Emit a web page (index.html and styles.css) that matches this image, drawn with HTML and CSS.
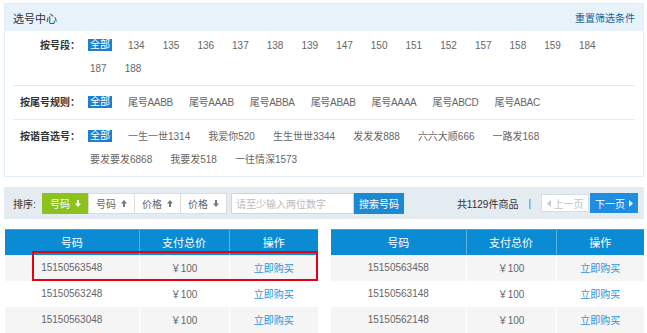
FILE: index.html
```html
<!DOCTYPE html>
<html>
<head>
<meta charset="utf-8">
<link rel="stylesheet" href="styles.css">
</head>
<body>
<div class="page">
  <div class="panel">
    <div class="panel-head">
      <span class="title">选号中心</span>
      <a class="reset">重置筛选条件</a>
    </div>
    <div class="filters">
      <div class="frow first">
        <div class="flabel">按号段：</div>
        <div class="fopts">
          <span class="opt on">全部</span><span class="opt">134</span><span class="opt">135</span><span class="opt">136</span><span class="opt">137</span><span class="opt">138</span><span class="opt">139</span><span class="opt">147</span><span class="opt">150</span><span class="opt">151</span><span class="opt">152</span><span class="opt">157</span><span class="opt">158</span><span class="opt">159</span><span class="opt">184</span><span class="opt">187</span><span class="opt">188</span>
        </div>
      </div>
      <div class="frow">
        <div class="flabel">按尾号规则：</div>
        <div class="fopts tight">
          <span class="opt on">全部</span><span class="opt">尾号AABB</span><span class="opt">尾号AAAB</span><span class="opt">尾号ABBA</span><span class="opt">尾号ABAB</span><span class="opt">尾号AAAA</span><span class="opt">尾号ABCD</span><span class="opt">尾号ABAC</span>
        </div>
      </div>
      <div class="frow last">
        <div class="flabel">按谐音选号：</div>
        <div class="fopts">
          <span class="opt on">全部</span><span class="opt">一生一世1314</span><span class="opt">我爱你520</span><span class="opt">生生世世3344</span><span class="opt">发发发888</span><span class="opt">六六大顺666</span><span class="opt">一路发168</span><span class="opt">要发要发6868</span><span class="opt">我要发518</span><span class="opt">一往情深1573</span>
        </div>
      </div>
    </div>
  </div>

  <div class="sortbar">
    <span class="sort-label">排序:</span>
    <div class="sort-btns">
      <span class="sbtn active">号码<svg class="arr" viewBox="0 0 7 8"><path d="M2.3 0h2.4v4h2.3L3.5 8 0 4h2.3z"/></svg></span>
      <span class="sbtn">号码<svg class="arr" viewBox="0 0 7 8"><path d="M2.3 8h2.4V4h2.3L3.5 0 0 4h2.3z"/></svg></span>
      <span class="sbtn">价格<svg class="arr" viewBox="0 0 7 8"><path d="M2.3 8h2.4V4h2.3L3.5 0 0 4h2.3z"/></svg></span>
      <span class="sbtn">价格<svg class="arr" viewBox="0 0 7 8"><path d="M2.3 0h2.4v4h2.3L3.5 8 0 4h2.3z"/></svg></span>
    </div>
    <span class="search-input">请至少输入两位数字</span>
    <span class="search-btn">搜索号码</span>
    <div class="pager">
      <span class="count">共1129件商品</span>
      <span class="sep">|</span>
      <span class="pbtn prev"><svg class="tri" viewBox="0 0 4 7"><path d="M4 0v7L0 3.5z"/></svg>上一页</span>
      <span class="pbtn next">下一页<svg class="tri" viewBox="0 0 4 7"><path d="M0 0v7l4-3.5z"/></svg></span>
    </div>
  </div>

  <div class="tables">
    <table class="tbl left">
      <colgroup><col class="c1"><col class="c2"><col class="c3"></colgroup>
      <thead><tr><th>号码</th><th>支付总价</th><th>操作</th></tr></thead>
      <tbody>
        <tr><td>15150563548</td><td>￥100</td><td><a class="buy">立即购买</a></td></tr>
        <tr><td>15150563248</td><td>￥100</td><td><a class="buy">立即购买</a></td></tr>
        <tr><td>15150563048</td><td>￥100</td><td><a class="buy">立即购买</a></td></tr>
      </tbody>
    </table>
    <table class="tbl right">
      <colgroup><col class="c1"><col class="c2"><col class="c3"></colgroup>
      <thead><tr><th>号码</th><th>支付总价</th><th>操作</th></tr></thead>
      <tbody>
        <tr><td>15150563458</td><td>￥100</td><td><a class="buy">立即购买</a></td></tr>
        <tr><td>15150563148</td><td>￥100</td><td><a class="buy">立即购买</a></td></tr>
        <tr><td>15150562148</td><td>￥100</td><td><a class="buy">立即购买</a></td></tr>
      </tbody>
    </table>
    <div class="highlight"></div>
  </div>
</div>
</body>
</html>
```

FILE: styles.css
```css
* { box-sizing: border-box; }
html, body { margin: 0; padding: 0; background: #fff; }
body {
  font-family: "Liberation Sans", "Noto Sans CJK SC", sans-serif;
  font-size: 10px;
  color: #666;
}
.page { padding: 3px 0 0 4px; width: 644px; }

.panel { border: 1px solid #e2ecf4; }
.panel-head {
  height: 27px;
  background: #e8f2fa;
  display: flex;
  align-items: center;
  justify-content: space-between;
  padding: 0 8px;
}
.title { font-size: 11px; color: #333; }
.reset { font-size: 10px; color: #1b5f91; }

.filters { padding: 0 8px; }
.frow {
  display: flex;
  align-items: flex-start;
  padding: 5px 0;
  border-bottom: 1px solid #e3ebf2;
}
.frow.first { padding-top: 3px; }
.frow.last { border-bottom: none; }
.flabel {
  width: 67px;
  flex: none;
  text-align: right;
  font-weight: bold;
  color: #333;
  line-height: 23px;
  margin-right: 8px;
}
.fopts { flex: 1; display: flex; flex-wrap: wrap; line-height: 23px; }
.opt { padding: 0 2px; margin-right: 14px; color: #666; white-space: nowrap; }
.fopts.tight .opt { margin-right: 12px; letter-spacing: -0.3px; }
.opt.on {
  background: #1f7fcf;
  color: #fff;
  line-height: 12px;
  height: 12px;
  margin-top: 5px;
  padding: 0 2px;
  align-self: flex-start;
}
.fopts .opt.on { margin-right: 14px; letter-spacing: 0; }

.sortbar {
  margin-top: 10px;
  height: 32px;
  background: #e4ebf1;
  display: flex;
  align-items: center;
  padding: 0 6px 0 9px;
}
.sort-label { color: #333; width: 29px; }
.sort-btns { display: flex; }
.sbtn {
  width: 47px;
  height: 21px;
  background: #fff;
  border: 1px solid #dcdcdc;
  margin-left: -1px;
  display: flex;
  align-items: center;
  justify-content: center;
  color: #666;
  font-size: 10px;
}
.sbtn:first-child { margin-left: 0; }
.sbtn.active { background: #8bc21c; border-color: #8bc21c; color: #fff; }
.arr { width: 6px; height: 7px; margin-left: 5px; fill: #777; }
.sbtn.active .arr { fill: #fff; }
.search-input {
  margin-left: 4px;
  width: 123px;
  height: 21px;
  border: 1px solid #cfd6dc;
  background: #fff;
  color: #bbb;
  display: flex;
  align-items: center;
  padding-left: 4px;
}
.search-btn {
  width: 50px;
  height: 21px;
  background: #1a8ad2;
  color: #fff;
  display: flex;
  align-items: center;
  justify-content: center;
}
.pager { margin-left: auto; display: flex; align-items: center; }
.count { color: #333; }
.sep { color: #3a78c0; margin: 0 10px 0 10px; }
.pbtn {
  width: 48px;
  display: flex;
  align-items: center;
  justify-content: center;
}
.prev { height: 18px; background: #fff; border: 1px solid #d6dde3; color: #c4c4c4; }
.next { height: 20px; background: #1f8de2; color: #fff; margin-left: 1px; }
.tri { width: 4px; height: 7px; }
.prev .tri { fill: #c8c8c8; margin-right: 3px; }
.next .tri { fill: #fff; margin-left: 4px; }

.tables {
  position: relative;
  margin-top: 10px;
  display: flex;
  gap: 13px;
}
.tbl {
  border-collapse: collapse;
  table-layout: fixed;
}
.tbl.left { width: 313px; margin-left: 1px; }
.tbl.left .c1 { width: 134px; }
.tbl.left .c2 { width: 90px; }
.tbl.right { width: 313px; }
.tbl.right .c1 { width: 135px; }
.tbl.right .c2 { width: 90px; }
.tbl th {
  height: 25px;
  background: #0a8bd3;
  color: #fff;
  font-weight: normal;
  font-size: 11px;
  border-left: 1px solid #59b2e6;
  border-top: 1px solid #3aa2df;
  padding: 0;
}
.tbl th:first-child { border-left: none; }
.tbl td {
  height: 26px;
  text-align: center;
  color: #666;
  font-size: 10px;
  border-left: 1px solid #fff;
  padding: 0;
}
.tbl td:first-child { border-left: none; }
.tbl tbody tr:nth-child(odd) td { background: #f5f5f5; }
.buy { color: #2a93d5; }

.highlight {
  position: absolute;
  left: 28px;
  top: 22px;
  width: 286px;
  height: 30px;
  border: 2px solid #e60012;
}
```
